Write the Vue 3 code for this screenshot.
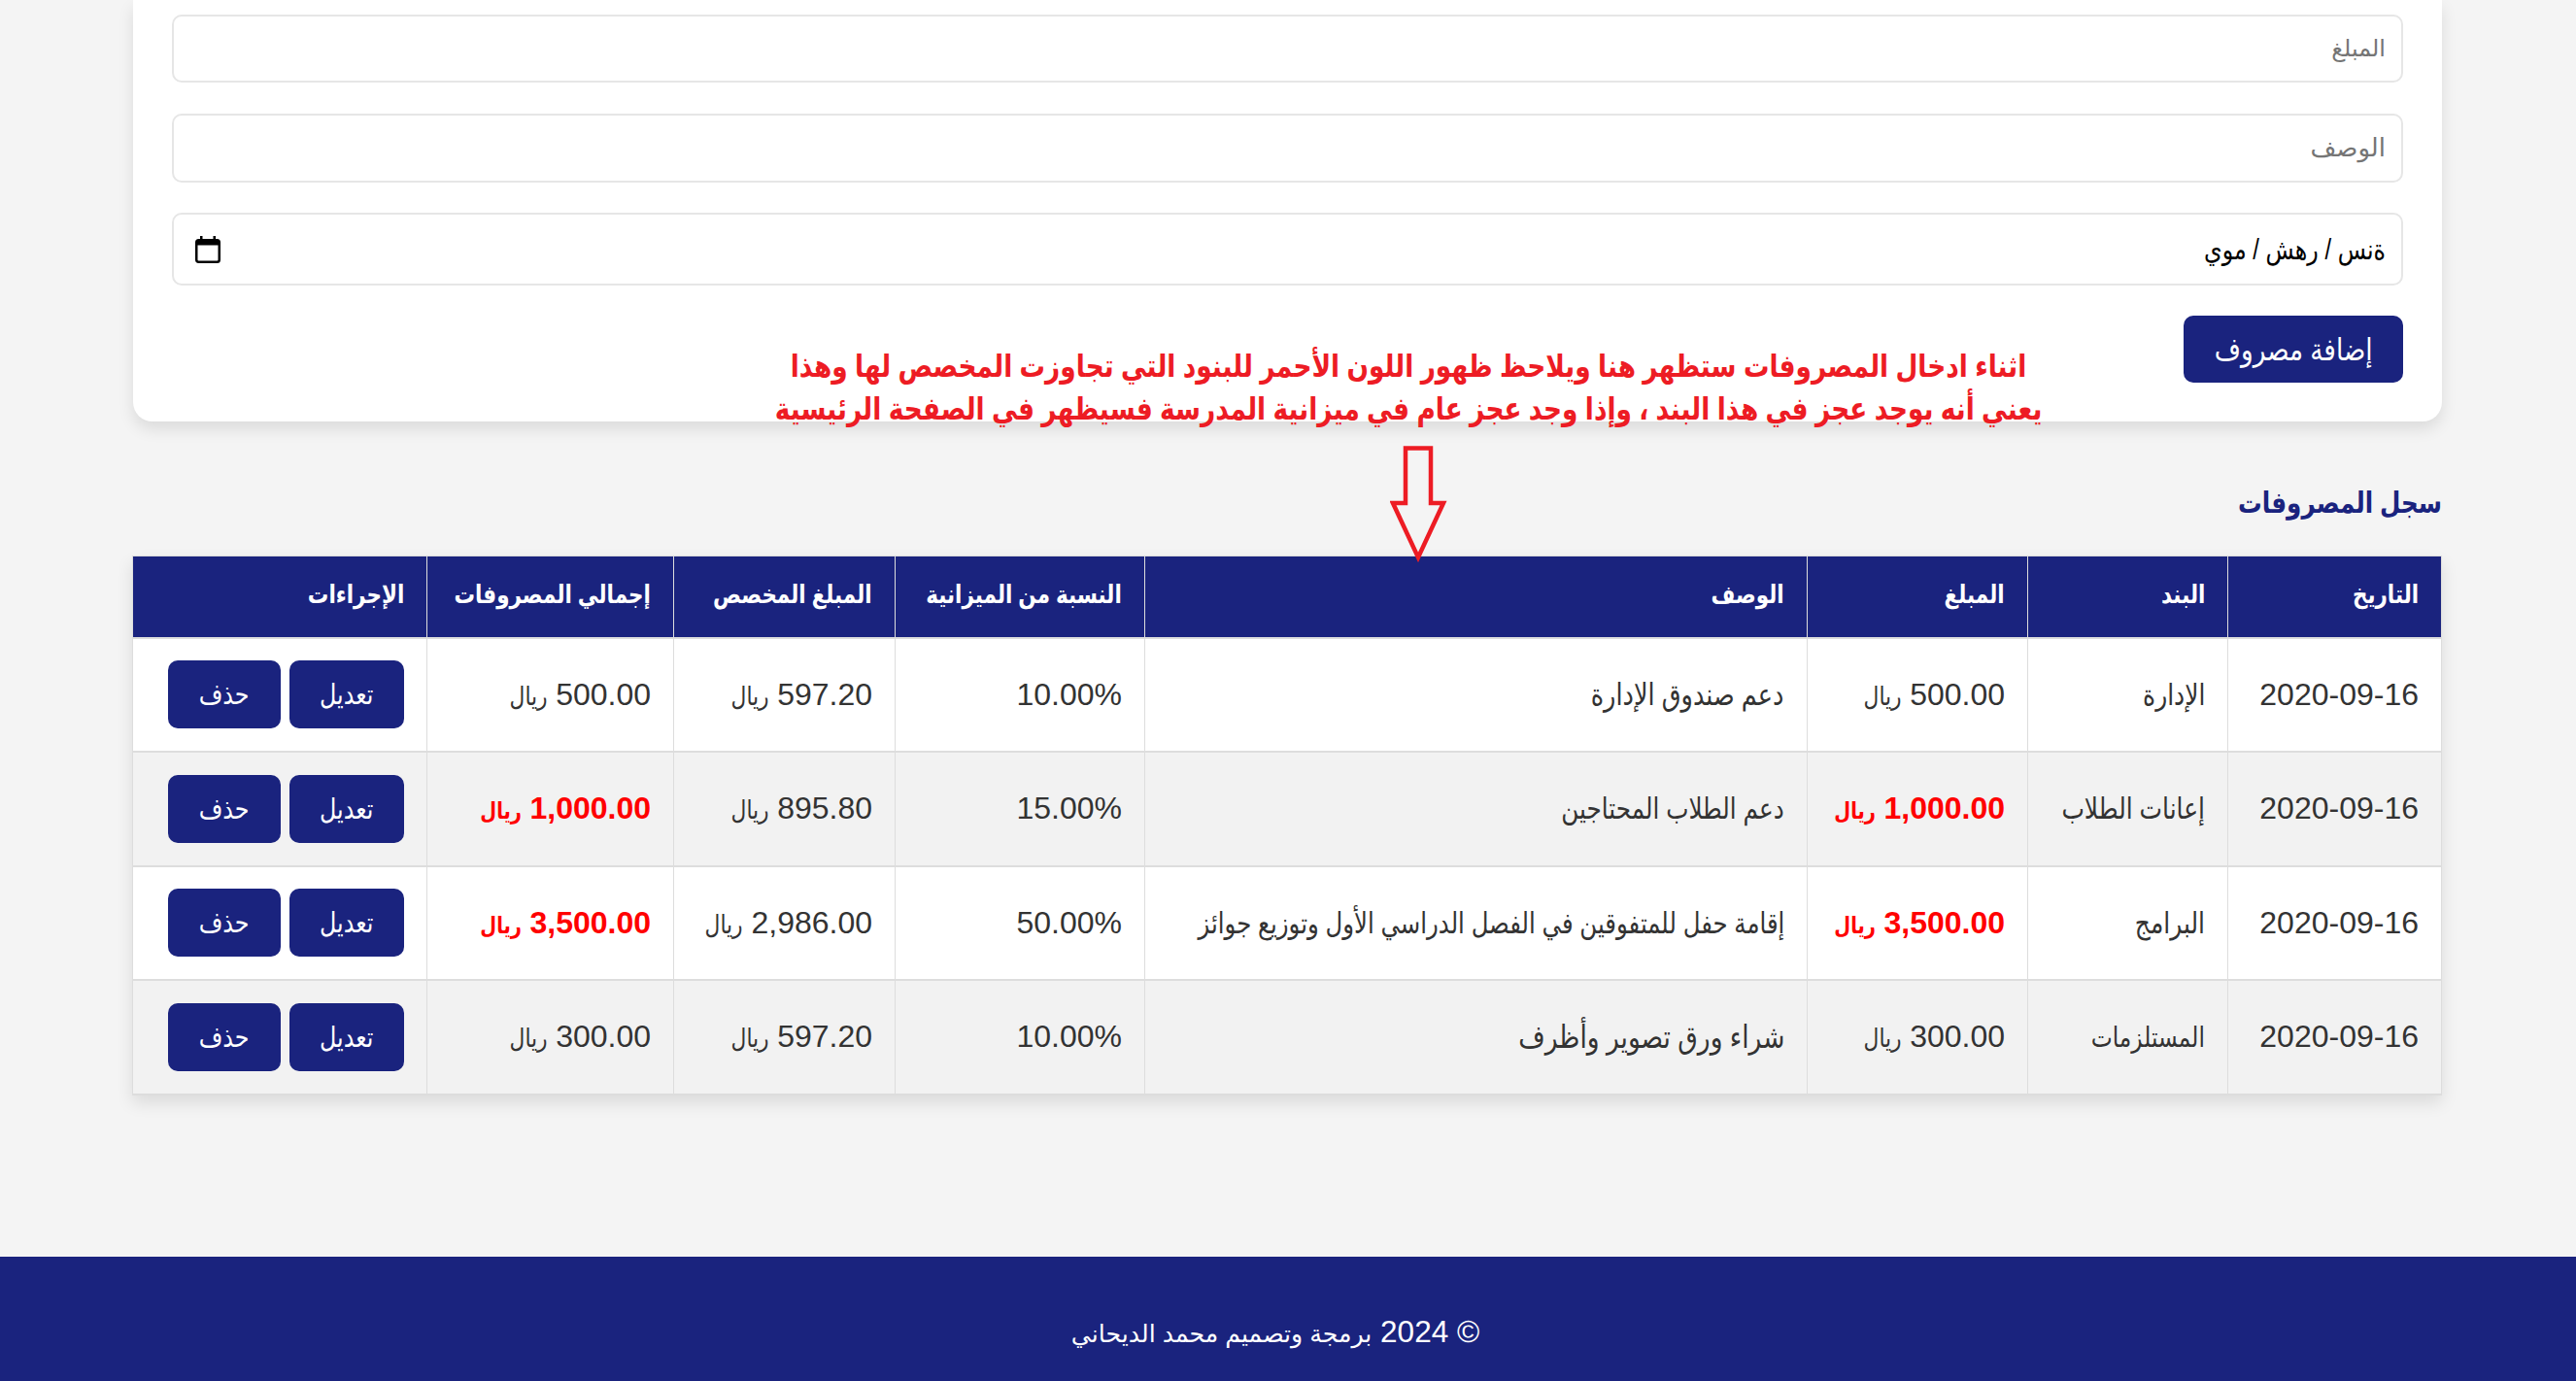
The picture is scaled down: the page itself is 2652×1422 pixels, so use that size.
<script setup>
const rows = [
  { date: '2020-09-16', item: 'الإدارة', itemSize: 'i-md', amount: '500.00', over: false, desc: 'دعم صندوق الإدارة', size: 'd1', pct: '10.00%', alloc: '597.20', total: '500.00' },
  { date: '2020-09-16', item: 'إعانات الطلاب', itemSize: 'i-md', amount: '1,000.00', over: true, desc: 'دعم الطلاب المحتاجين', size: 'd2', pct: '15.00%', alloc: '895.80', total: '1,000.00' },
  { date: '2020-09-16', item: 'البرامج', itemSize: 'i-md', amount: '3,500.00', over: true, desc: 'إقامة حفل للمتفوقين في الفصل الدراسي الأول وتوزيع جوائز', size: 'd3', pct: '50.00%', alloc: '2,986.00', total: '3,500.00' },
  { date: '2020-09-16', item: 'المستلزمات', itemSize: 'i-sm', amount: '300.00', over: false, desc: 'شراء ورق تصوير وأظرف', size: 'd4', pct: '10.00%', alloc: '597.20', total: '300.00' }
]
const headers = ['التاريخ', 'البند', 'المبلغ', 'الوصف', 'النسبة من الميزانية', 'المبلغ المخصص', 'إجمالي المصروفات', 'الإجراءات']
</script>

<template>
  <div class="page" dir="rtl">
    <main class="main">
      <section class="card">
        <input class="field f1" type="text" placeholder="المبلغ" />
        <input class="field f2" type="text" placeholder="الوصف" />
        <div class="field date">
          <span class="date-text narrow">ةنس / رهش / موي</span>
          <svg class="cal" viewBox="0 0 26 28" width="26" height="28">
            <path d="M5 0h2.500v3h11V0H21v3h1.500A3.500 3.500 0 0 1 26 6.500v18a3.500 3.500 0 0 1-3.500 3.500h-19A3.500 3.500 0 0 1 0 24.500v-18A3.500 3.500 0 0 1 3.500 3H5zM2.500 9.500v15a1 1 0 0 0 1 1h19a1 1 0 0 0 1-1v-15z" fill="#000" fill-rule="evenodd" />
          </svg>
        </div>
        <button class="btn add" type="button"><span class="narrow mid">إضافة مصروف</span></button>
      </section>

      <h3 class="title"><span class="narrow">سجل المصروفات</span></h3>

      <table class="table">
        <colgroup>
          <col class="c1" /><col class="c2" /><col class="c3" /><col class="c4" />
          <col class="c5" /><col class="c6" /><col class="c7" /><col class="c8" />
        </colgroup>
        <thead>
          <tr><th v-for="h in headers" :key="h"><span class="narrow">{{ h }}</span></th></tr>
        </thead>
        <tbody>
          <tr v-for="(r, i) in rows" :key="i">
            <td>{{ r.date }}</td>
            <td><span class="narrow" :class="r.itemSize">{{ r.item }}</span></td>
            <td :class="{ over: r.over }">{{ r.amount }} <span class="narrow cur">ريال</span></td>
            <td><span class="narrow" :class="r.size">{{ r.desc }}</span></td>
            <td>{{ r.pct }}</td>
            <td>{{ r.alloc }} <span class="narrow cur">ريال</span></td>
            <td :class="{ over: r.over }">{{ r.total }} <span class="narrow cur">ريال</span></td>
            <td>
              <div class="actions">
                <button class="btn edit" type="button"><span class="narrow mid">تعديل</span></button>
                <button class="btn del" type="button"><span class="narrow mid">حذف</span></button>
              </div>
            </td>
          </tr>
        </tbody>
      </table>
    </main>

    <footer class="footer"><span class="copy">© 2024 <span class="ft-ar">برمجة وتصميم محمد الديحاني</span></span></footer>

    <div class="note">
      <div>اثناء ادخال المصروفات ستظهر هنا ويلاحظ ظهور اللون الأحمر للبنود التي تجاوزت المخصص لها وهذا</div>
      <div>يعني أنه يوجد عجز في هذا البند ، وإذا وجد عجز عام في ميزانية المدرسة فسيظهر في الصفحة الرئيسية</div>
    </div>
    <svg class="arrow" viewBox="0 0 60 122" width="60" height="122">
      <path d="M16 3.500H42V60H55L29 116L3 60H16Z" fill="none" stroke="#ed1c24" stroke-width="4.500" />
    </svg>
  </div>
</template>

<style scoped>
.page {
  position: relative;
  height: 1422px;
  background: #f4f4f4;
  font-family: "Liberation Sans", "DejaVu Sans", sans-serif;
  color: #333;
  overflow: hidden;
  display: flex;
  flex-direction: column;
}
.main {
  flex: 1;
  padding: 0 138px 0 137px;
}
.narrow {
  display: inline-block;
  transform: scaleX(0.82);
  transform-origin: right center;
  white-space: nowrap;
}
.mid { transform-origin: center; }
.cur { font-size: 0.83em; }
.over .cur { font-size: 0.74em; }
.i-md { font-size: 0.95em; }
.i-sm { font-size: 0.89em; }
.d1 { font-size: 0.975em; }
.d2 { font-size: 0.94em; }
.d3 { font-size: 0.93em; }
.d4 { font-size: 1.01em; }
.card {
  background: #fff;
  border-radius: 0 0 20px 20px;
  box-shadow: 0 8px 16px rgba(0, 0, 0, 0.1);
  padding: 15px 40px 40px;
  height: 434px;
  box-sizing: border-box;
}
.field {
  display: block;
  width: 100%;
  box-sizing: border-box;
  border: 2px solid #e6e6e6;
  border-radius: 10px;
  background: #fff;
  padding: 0 16px;
  font-family: inherit;
  font-size: 24px;
  outline: none;
}
.f1 { height: 70px; margin-bottom: 32px; }
.f2 { height: 71px; margin-bottom: 31px; font-size: 26px; }
.date {
  height: 75px;
  margin-bottom: 31px;
  display: flex;
  align-items: center;
  justify-content: space-between;
  color: #000;
  padding: 0 16px 0 22px;
  font-size: 29px;
}
.cal { display: block; }
.btn {
  background: #1a237e;
  color: #fff;
  border: none;
  border-radius: 10px;
  font-family: inherit;
  font-size: 29px;
  padding: 0;
  display: block;
}
.add { width: 226px; height: 69px; font-size: 32px; }
.title {
  margin: 63px 0 33px;
  font-size: 30px;
  line-height: 42px;
  font-weight: 700;
  color: #1a237e;
}
.table {
  width: 2377px;
  table-layout: fixed;
  border-collapse: collapse;
  box-shadow: 0 8px 16px rgba(0, 0, 0, 0.1);
  background: #fff;
}
.c1 { width: 220px; } .c2 { width: 206px; } .c3 { width: 227px; } .c4 { width: 682px; }
.c5 { width: 257px; } .c6 { width: 228px; } .c7 { width: 254px; } .c8 { width: 303px; }
th, td {
  border: 1px solid #ddd;
  border-bottom-width: 2px;
  padding: 0 23px;
  text-align: right;
  white-space: nowrap;
}
th {
  background: #1a237e;
  color: #fff;
  height: 84px;
  padding-bottom: 4px;
  box-sizing: border-box;
  font-size: 26.200px;
  font-weight: 700;
}
td { font-size: 32px; height: 115.500px; color: #333; }
tbody tr:nth-child(even) td { background: #f2f2f2; }
.over { color: #f00; font-weight: 700; }
.actions { display: flex; gap: 9px; }
.edit { width: 118px; height: 70px; }
.del { width: 116px; height: 70px; }
.footer {
  height: 128px;
  box-sizing: border-box;
  background: #1a237e;
  color: #fff;
  padding-top: 59px;
  padding-right: 26px;
  text-align: center;
  font-size: 31.500px;
}
.ft-ar { font-size: 0.8em; }
.note {
  position: absolute;
  left: 550px;
  top: 355px;
  width: 1800px;
  text-align: center;
  color: #ed1c24;
  font-weight: 700;
  font-size: 32.200px;
  line-height: 44px;
  white-space: nowrap;
}
.note div { transform: scaleX(0.82); }
.arrow {
  position: absolute;
  left: 1431px;
  top: 458px;
}
</style>
